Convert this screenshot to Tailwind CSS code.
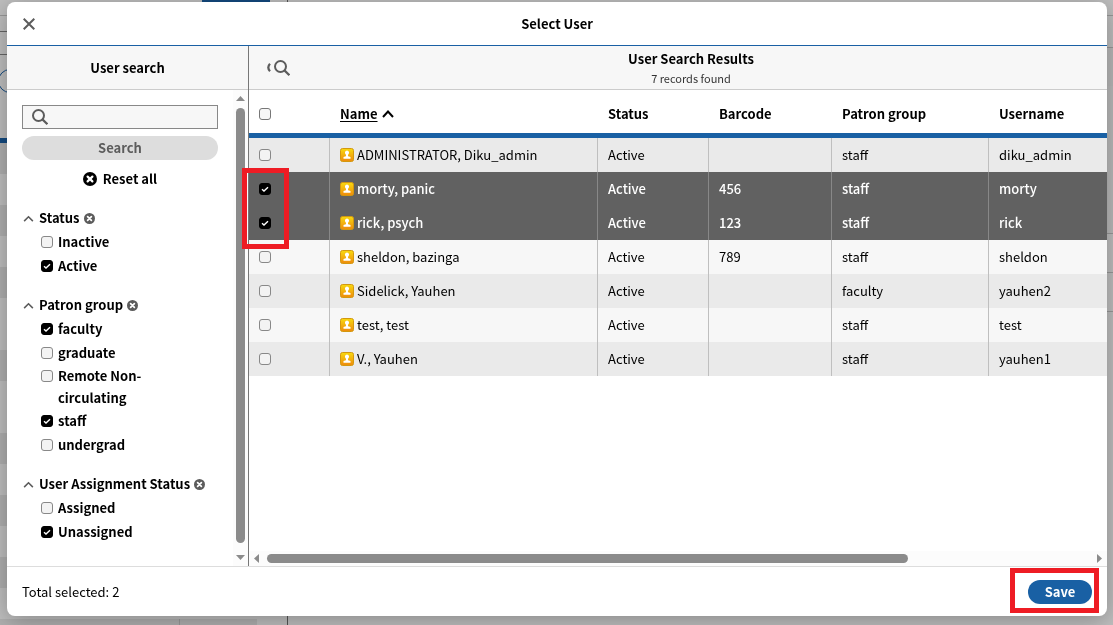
<!DOCTYPE html>
<html lang="en">
<head>
  <meta charset="UTF-8" />
  <meta name="viewport" content="width=device-width, initial-scale=1" />
  <title>Select User</title>
  <script src="https://cdn.jsdelivr.net/npm/@tailwindcss/browser@4"></script>
</head>
<body class="min-h-screen bg-[#bfbfbf] font-['Noto_Sans_CJK_SC','Noto_Sans',sans-serif] text-[13px] leading-[22px] text-black">

  <!-- Shared icons -->
  <svg class="absolute size-0" aria-hidden="true">
    <defs>
      <linearGradient id="gold" x1="0" y1="0" x2="0" y2="1">
        <stop offset="0" stop-color="#f8d90f" />
        <stop offset="1" stop-color="#ee8a0c" />
      </linearGradient>
    </defs>
    <symbol id="icon-search" viewBox="0 0 16 16">
      <circle cx="6.5" cy="6.5" r="5.5" fill="none" stroke="currentColor" stroke-width="2" />
      <path d="M10.4 10.4 15.4 15.2" stroke="currentColor" stroke-width="2.2" />
    </symbol>
    <symbol id="icon-clear" viewBox="0 0 14 14">
      <circle cx="7" cy="7" r="7" fill="currentColor" />
      <path d="M4.6 4.6 9.4 9.4M9.4 4.6 4.6 9.4" stroke="#fff" stroke-width="2.2" stroke-linecap="round" />
    </symbol>
    <symbol id="icon-caret" viewBox="0 0 12 8">
      <path d="M1 7 6 2 11 7" fill="none" stroke="currentColor" stroke-width="1.8" />
    </symbol>
    <symbol id="icon-user" viewBox="0 0 14 14">
      <rect x=".5" y=".5" width="13" height="13" rx="2" fill="url(#gold)" stroke="#d3980f" />
      <path d="M7 2.6a2.1 2.1 0 0 1 1.2 3.8c-.3.4-.3 1.4 0 1.8l2.3.8v1.8h-7V9l2.3-.8c.3-.4.3-1.4 0-1.8A2.1 2.1 0 0 1 7 2.6z" fill="#fff" />
    </symbol>
  </svg>

  <!-- Page behind the dialog -->
  <div class="fixed inset-0 flex" aria-hidden="true">
    <div class="flex w-[288px] flex-col border-r border-[#555]">
      <div class="flex h-4 items-start justify-end border-b border-[#999] pr-[17px]">
        <div class="h-[2px] w-[68px] bg-[#134a80]"></div>
      </div>
      <div class="h-4 border-b border-[#666]"></div>
      <div class="h-[23px] border-b border-[#666]"></div>
      <div class="h-[83px] pt-[14px]">
        <div class="-ml-[2px] size-6 rounded-full border border-[#134a80]"></div>
      </div>
      <div class="h-[5px] shrink-0 bg-[#134a80]"></div>
      <div class="flex grow flex-col pr-[30px]">
        <div class="h-[31px] bg-[#b0b0b0]"></div>
        <div class="h-[31px]"></div>
        <div class="h-[31px] bg-[#b0b0b0]"></div>
        <div class="h-[31px]"></div>
        <div class="h-[31px] bg-[#b0b0b0]"></div>
        <div class="h-[52px]"></div>
        <div class="h-[31px] bg-[#b0b0b0]"></div>
        <div class="h-[52px]"></div>
        <div class="h-[31px] bg-[#b0b0b0]"></div>
        <div class="h-[31px]"></div>
        <div class="h-[31px] bg-[#b0b0b0]"></div>
        <div class="h-[31px]"></div>
        <div class="h-[31px] bg-[#b0b0b0]"></div>
        <div class="h-[31px]"></div>
        <div class="flex grow bg-[#b0b0b0]"><div class="w-[180px] border-r border-[#999]"></div></div>
      </div>
    </div>
    <div class="grow">
      <div class="h-4 border-b border-[#999]"></div>
      <div class="h-8 border-b border-[#999]"></div>
      <div class="h-[38px] bg-[#b9b9b9]"></div>
      <div class="h-[148px] border-b border-[#999] bg-[#bbb]"></div>
      <div class="h-[39px] border-b border-[#999]"></div>
      <div class="h-[39px] border-b border-[#999]"></div>
    </div>
  </div>

  <div class="relative flex min-h-screen pt-[2px] pr-[6px] pb-[9px] pl-[7px]">
    <div role="dialog" aria-labelledby="dialog-title" class="flex grow flex-col rounded-lg bg-white shadow-[0_4px_24px_rgba(0,0,0,0.3)]">

      <!-- Dialog header -->
      <header class="flex h-11 items-center border-b border-[#1960a4] px-4">
        <button type="button" aria-label="Close" class="flex w-8 text-[#5c5c5c]">
          <svg class="size-3" viewBox="0 0 12 12"><path d="M.7.7 11.3 11.3M11.3.7.7 11.3" stroke="currentColor" stroke-width="2" /></svg>
        </button>
        <h1 id="dialog-title" class="grow text-center font-bold">Select User</h1>
        <div class="w-8"></div>
      </header>

      <div class="flex grow">
        <!-- Filters -->
        <aside class="flex w-[242px] shrink-0 flex-col border-r border-[#777]">
          <div class="flex h-11 items-center justify-center border-b border-[#ccc] bg-[#f7f7f7]">
            <h2 class="font-bold">User search</h2>
          </div>
          <div class="flex grow">
            <form class="flex grow flex-col pt-[15px] pl-[15px] pr-[15px] font-bold">
              <div class="flex h-6 items-center border border-[#888] bg-[#f7f7f7] pl-[9px]">
                <svg class="size-4 shrink-0 text-[#5c5c5c]"><use href="#icon-search" /></svg>
                <input type="text" aria-label="Search users" class="w-full min-w-0 px-2 font-normal outline-none" />
              </div>
              <button type="submit" class="mt-[7px] h-6 rounded-full bg-[#ddd] text-[#5c5c5c]">Search</button>
              <button type="button" class="mt-2 flex items-center justify-center gap-[6px]">
                <svg class="size-[14px]"><use href="#icon-clear" /></svg>
                Reset all
              </button>

              <section class="mt-4">
                <h3 class="flex h-6 items-center">
                  <svg class="mx-px mr-[5px] h-[7px] w-[11px] text-[#5c5c5c]"><use href="#icon-caret" /></svg>
                  Status
                  <svg class="ml-1 size-[11px] text-[#5c5c5c]"><use href="#icon-clear" /></svg>
                </h3>
                <ul class="filter-list pl-[19px]" data-options="Inactive,Active*"></ul>
              </section>
              <section class="mt-[15px]">
                <h3 class="flex h-6 items-center">
                  <svg class="mx-px mr-[5px] h-[7px] w-[11px] text-[#5c5c5c]"><use href="#icon-caret" /></svg>
                  Patron group
                  <svg class="ml-1 size-[11px] text-[#5c5c5c]"><use href="#icon-clear" /></svg>
                </h3>
                <ul class="filter-list pl-[19px]" data-options="faculty*,graduate,Remote Non-circulating,staff*,undergrad"></ul>
              </section>
              <section class="mt-[15px] mb-[22px]">
                <h3 class="flex h-6 items-center whitespace-nowrap">
                  <svg class="mx-px mr-[5px] h-[7px] w-[11px] text-[#5c5c5c]"><use href="#icon-caret" /></svg>
                  User Assignment Status
                  <svg class="ml-1 size-[11px] text-[#5c5c5c]"><use href="#icon-clear" /></svg>
                </h3>
                <ul class="filter-list pl-[19px]" data-options="Assigned,Unassigned*"></ul>
              </section>
            </form>
            <!-- Vertical scrollbar -->
            <div class="flex w-[15px] shrink-0 flex-col items-center bg-[#fcfcfc] py-[6px] text-[#8b8b8b]">
              <svg class="h-[5px] w-[9px]" viewBox="0 0 9 5"><path d="M0 5 4.5 0 9 5z" fill="currentColor" /></svg>
              <div class="mt-[7px] mb-3 w-[9px] grow rounded-full bg-[#8b8b8b]"></div>
              <svg class="h-[5px] w-[9px]" viewBox="0 0 9 5"><path d="M0 0 4.5 5 9 0z" fill="currentColor" /></svg>
            </div>
          </div>
        </aside>

        <!-- Results -->
        <main class="relative flex min-w-0 grow flex-col">
          <div class="flex h-11 items-center border-b border-[#ccc] bg-[#f7f7f7] pl-[17px] pr-[17px]">
            <button type="button" aria-label="Hide search pane" class="flex w-10 items-center text-[#5c5c5c]">
              <svg class="h-[9px] w-[5px]" viewBox="0 0 5 9"><path d="M4 .8Q.6 4.5 4 8.2" fill="none" stroke="currentColor" stroke-width="2.2" /></svg>
              <svg class="ml-[3px] size-4"><use href="#icon-search" /></svg>
            </button>
            <div class="grow pr-[14px] text-center">
              <h2 class="leading-5 font-bold">User Search Results</h2>
              <p class="text-[11px] leading-[18px] text-[#333]">7 records found</p>
            </div>
          </div>

          <div class="grow overflow-hidden">
            <table class="w-full table-fixed border-separate border-spacing-0 text-left">
              <colgroup>
                <col class="w-[81px]" />
                <col class="w-[268px]" />
                <col class="w-[111px]" />
                <col class="w-[123px]" />
                <col class="w-[157px]" />
                <col />
              </colgroup>
              <thead>
                <tr class="h-12">
                  <th class="border-b-[5px] border-[#1960a4] px-[10px] pt-1"><input type="checkbox" aria-label="Select all" class="block size-3 appearance-none rounded-[3px] border border-[#777] bg-[#f7f7f7]" /></th>
                  <th class="border-b-[5px] border-[#1960a4] px-[10px] pt-1">
                    <button type="button" class="flex items-center gap-1">
                      <span class="underline underline-offset-2">Name</span>
                      <svg class="h-2 w-3" viewBox="0 0 12 8"><path d="M1 7 6 1.5 11 7" fill="none" stroke="currentColor" stroke-width="2" /></svg>
                    </button>
                  </th>
                  <th class="border-b-[5px] border-[#1960a4] px-[10px] pt-1">Status</th>
                  <th class="border-b-[5px] border-[#1960a4] px-[10px] pt-1">Barcode</th>
                  <th class="border-b-[5px] border-[#1960a4] px-[10px] pt-1">Patron group</th>
                  <th class="border-b-[5px] border-[#1960a4] px-[10px] pt-1">Username</th>
                </tr>
              </thead>
              <tbody id="results"></tbody>
            </table>
          </div>

          <!-- Horizontal scrollbar -->
          <div class="flex h-[15px] items-center bg-[#fcfcfc] px-[5px] text-[#8b8b8b]">
            <svg class="h-[9px] w-[5px]" viewBox="0 0 5 9"><path d="M5 0 0 4.5 5 9z" fill="currentColor" /></svg>
            <div class="mx-2 flex grow"><div class="h-[9px] w-[78%] rounded-full bg-[#8b8b8b]"></div></div>
            <svg class="h-[9px] w-[5px]" viewBox="0 0 5 9"><path d="M0 0 5 4.5 0 9z" fill="currentColor" /></svg>
          </div>

          <!-- Highlight around the ticked rows -->
          <div class="pointer-events-none absolute top-[122px] -left-[7px] h-[81px] w-[47px] border-[5px] border-[#ee1c24]"></div>
        </main>
      </div>

      <!-- Dialog footer -->
      <footer class="flex h-[50px] items-center justify-between border-t border-[#ddd] px-[15px]">
        <span>Total selected: 2</span>
        <div class="relative">
          <button type="button" class="block h-6 w-16 rounded-full bg-[#1960a4] font-bold text-white">Save</button>
          <div class="pointer-events-none absolute -top-3 -right-[7px] h-[45px] w-[89px] border-[5px] border-[#ee1c24]"></div>
        </div>
      </footer>
    </div>
  </div>

  <script>
    const users = [
      { name: 'ADMINISTRATOR, Diku_admin', barcode: '', group: 'staff', username: 'diku_admin' },
      { name: 'morty, panic', barcode: '456', group: 'staff', username: 'morty', selected: true },
      { name: 'rick, psych', barcode: '123', group: 'staff', username: 'rick', selected: true },
      { name: 'sheldon, bazinga', barcode: '789', group: 'staff', username: 'sheldon' },
      { name: 'Sidelick, Yauhen', barcode: '', group: 'faculty', username: 'yauhen2' },
      { name: 'test, test', barcode: '', group: 'staff', username: 'test' },
      { name: 'V., Yauhen', barcode: '', group: 'staff', username: 'yauhen1' },
    ];

    function checkbox(checked, attrs, extra) {
      return `<span class="relative block size-3 shrink-0 ${extra}">
        <input type="checkbox" ${attrs} ${checked ? 'checked' : ''} class="peer block size-3 appearance-none rounded-[3px] border border-[#888] bg-[#f3f3f3] checked:border-black checked:bg-black" />
        <svg class="pointer-events-none absolute inset-0 hidden size-3 peer-checked:block" viewBox="0 0 12 12"><path d="M3 6.2 5 8 9 4.2" fill="none" stroke="#fff" stroke-width="1.4" /></svg>
      </span>`;
    }

    // A trailing * marks an option that is ticked
    document.querySelectorAll('.filter-list').forEach(list => {
      list.innerHTML = list.dataset.options.split(',').map(option => {
        const text = option.replace('*', '');
        return `<li class="flex min-h-6 items-center"><label class="flex items-start gap-[5px]">
          ${checkbox(option.endsWith('*'), '', 'mt-[5px]')}<span class="max-w-[110px]">${text}</span></label></li>`;
      }).join('');
    });

    document.getElementById('results').innerHTML = users.map((user, i) => {
      const row = user.selected ? 'bg-[#616161] font-medium text-white' : i % 2 ? 'bg-[#f7f7f7]' : 'bg-[#eaeaea]';
      const cell = user.selected ? 'border-r border-[#888] px-[10px]' : 'border-r border-[#bfbfbf] px-[10px]';
      return `<tr class="h-[34px] ${row}">
        <td class="${cell}">${checkbox(user.selected, `aria-label="Select ${user.name}"`, '')}</td>
        <td class="${cell}"><div class="flex items-center gap-[3px]"><svg class="size-[14px] shrink-0"><use href="#icon-user" /></svg>${user.name}</div></td>
        <td class="${cell}">Active</td>
        <td class="${cell}">${user.barcode}</td>
        <td class="${cell}">${user.group}</td>
        <td class="px-[10px]">${user.username}</td>
      </tr>`;
    }).join('');
  </script>
</body>
</html>
